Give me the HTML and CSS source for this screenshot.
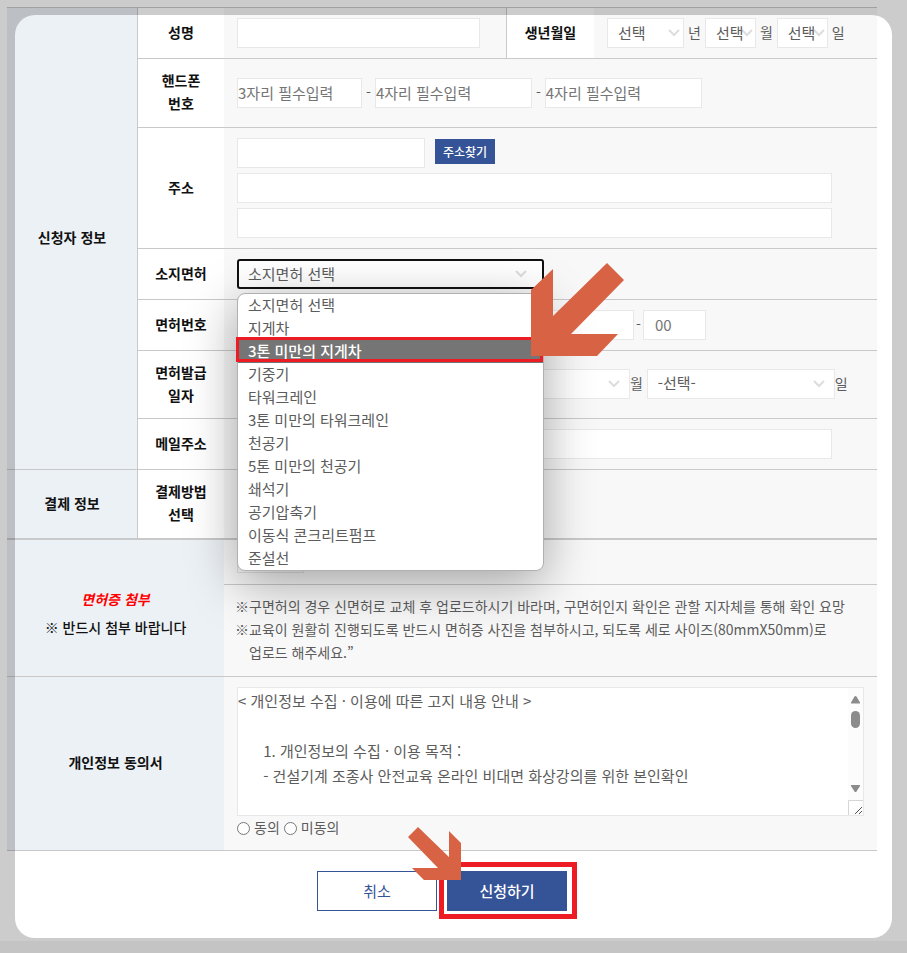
FILE: index.html
```html
<!DOCTYPE html>
<html lang="ko">
<head>
    <meta charset="UTF-8">
    <meta name="viewport" content="width=device-width, initial-scale=1.0">
    <title>교육 신청</title>
    <link rel="stylesheet" href="styles.css">
</head>
<body>
    <form class="apply">
        <table class="form-table">
            <colgroup>
                <col class="col-group">
                <col class="col-label">
                <col class="col-name">
                <col class="col-birth">
                <col>
            </colgroup>
            <tr>
                <th class="group split" rowspan="7">신청자 정보</th>
                <th><label for="name">성명</label></th>
                <td><input type="text" id="name" class="w-name"></td>
                <th class="birth">생년월일</th>
                <td>
                    <div class="line">
                        <select class="w-year" aria-label="년"><option>선택</option></select>
                        <span>년</span>
                        <select class="w-day" aria-label="월"><option>선택</option></select>
                        <span>월</span>
                        <select class="w-day" aria-label="일"><option>선택</option></select>
                        <span>일</span>
                    </div>
                </td>
            </tr>
            <tr class="row-tall">
                <th>핸드폰<br>번호</th>
                <td colspan="3">
                    <div class="line">
                        <input type="text" class="w-phone1" placeholder="3자리 필수입력" aria-label="핸드폰 앞자리">
                        <span>-</span>
                        <input type="text" class="w-phone" placeholder="4자리 필수입력" aria-label="핸드폰 가운데자리">
                        <span>-</span>
                        <input type="text" class="w-phone" placeholder="4자리 필수입력" aria-label="핸드폰 끝자리">
                    </div>
                </td>
            </tr>
            <tr>
                <th>주소</th>
                <td colspan="3">
                    <div class="address">
                        <div class="zip">
                            <input type="text" class="w-zip" aria-label="우편번호">
                            <button type="button" class="btn-find">주소찾기</button>
                        </div>
                        <input type="text" class="w-full" aria-label="주소">
                        <input type="text" class="w-full" aria-label="상세주소">
                    </div>
                </td>
            </tr>
            <tr>
                <th><label for="license">소지면허</label></th>
                <td colspan="3">
                    <div class="license">
                        <select id="license" class="focused"><option>소지면허 선택</option></select>
                        <ul class="options">
                            <li>소지면허 선택</li>
                            <li>지게차</li>
                            <li class="active">3톤 미만의 지게차</li>
                            <li>기중기</li>
                            <li>타워크레인</li>
                            <li>3톤 미만의 타워크레인</li>
                            <li>천공기</li>
                            <li>5톤 미만의 천공기</li>
                            <li>쇄석기</li>
                            <li>공기압축기</li>
                            <li>이동식 콘크리트펌프</li>
                            <li>준설선</li>
                        </ul>
                        <svg class="arrow arrow-license" width="93" height="93" viewBox="0 0 93 93" aria-hidden="true">
                            <path d="M22 6V53L76 0L93 17L40 71H87L66 93H0V27Z"/>
                        </svg>
                    </div>
                </td>
            </tr>
            <tr>
                <th>면허번호</th>
                <td colspan="3">
                    <div class="line tight">
                        <input type="text" class="w-number" aria-label="면허번호">
                        <span>-</span>
                        <input type="text" class="w-suffix" placeholder="00" aria-label="면허번호 끝자리">
                    </div>
                </td>
            </tr>
            <tr class="row-date">
                <th>면허발급<br>일자</th>
                <td colspan="3">
                    <div class="line date">
                        <label><select><option></option></select>년</label>
                        <label><select><option></option></select>월</label>
                        <label><select><option>-선택-</option></select>일</label>
                    </div>
                </td>
            </tr>
            <tr>
                <th><label for="mail">메일주소</label></th>
                <td colspan="3"><input type="text" id="mail" class="w-full"></td>
            </tr>
            <tr class="row-tall">
                <th class="group split">결제 정보</th>
                <th>결제방법<br>선택</th>
                <td colspan="3"><input type="radio" name="pay" aria-label="결제방법"></td>
            </tr>
        </table>

        <table class="form-table">
            <colgroup>
                <col class="col-wide">
                <col>
            </colgroup>
            <tr class="row-file">
                <th class="group attach" rowspan="2">
                    <label for="file"><em>면허증 첨부</em><br><span>※ 반드시 첨부 바랍니다</span></label>
                </th>
                <td><input type="file" id="file"></td>
            </tr>
            <tr>
                <td class="notice">
                    <ul>
                        <li>구면허의 경우 신면허로 교체 후 업로드하시기 바라며, 구면허인지 확인은 관할 지자체를 통해 확인 요망</li>
                        <li>교육이 원활히 진행되도록 반드시 면허증 사진을 첨부하시고, 되도록 세로 사이즈(80mmX50mm)로<br>업로드 해주세요.”</li>
                    </ul>
                </td>
            </tr>
            <tr>
                <th class="group"><label for="terms">개인정보 동의서</label></th>
                <td>
                    <div class="terms">
                        <textarea id="terms" readonly>&lt; 개인정보 수집 · 이용에 따른 고지 내용 안내 &gt;

      1. 개인정보의 수집 · 이용 목적 :
      - 건설기계 조종사 안전교육 온라인 비대면 화상강의를 위한 본인확인
</textarea>
                        <div class="scrollbar">
                            <svg width="15" height="127" viewBox="0 0 15 127" aria-hidden="true">
                                <path fill="#8b8b8b" d="M6.500 8.500Q7.500 7.500 8.500 8.500L12 14.500V15.500H3V14.500ZM3 97V98L6.500 103.500Q7.500 104.500 8.500 103.500L12 98V97Z"/>
                                <rect x="3" y="23" width="9" height="17" rx="4.500" fill="#8b8b8b"/>
                                <path fill="#fff" stroke="#d5d5d5" d="M0.500 127.500V112.500H15"/>
                                <path fill="none" stroke="#555" d="M7 126L14 119M11 126L14 123"/>
                            </svg>
                        </div>
                    </div>
                    <div class="line agree">
                        <label class="radio"><input type="radio" name="agree"><span>동의</span></label>
                        <label class="radio"><input type="radio" name="agree"><span>미동의</span></label>
                    </div>
                </td>
            </tr>
        </table>

        <div class="buttons">
            <button type="button" class="btn">취소</button>
            <div class="submit">
                <button type="submit" class="btn btn-primary">신청하기</button>
                <svg class="arrow arrow-submit" width="53" height="53" viewBox="0 0 53 53" aria-hidden="true">
                    <path d="M41 4L53 16V53H16L4 41H30L0 10L10 0L41 30Z"/>
                </svg>
            </div>
        </div>
    </form>
    <footer></footer>
    <div class="spotlight"></div>
</body>
</html>
```
FILE: styles.css
```css
* {
    box-sizing: border-box;
}
body {
    margin: 0;
    min-height: 100vh;
    display: flex;
    flex-direction: column;
    background: #fff;
    color: #5c5c5c;
    font-family: "Noto Sans CJK KR", sans-serif;
    font-size: 14px;
    line-height: 23px;
}
.apply {
    padding: 7px 30px 30px 7px;
}
footer {
    flex: 1;
    background: #f5f5f5;
}

/* form tables */
.form-table {
    width: 100%;
    table-layout: fixed;
    border-collapse: separate;
    border-spacing: 0;
    border-top: 1px solid #c9c9c9;
}
.col-group {
    width: 131px;
}
.col-label {
    width: 86px;
}
.col-name {
    width: 282px;
}
.col-birth {
    width: 88px;
}
.col-wide {
    width: 217px;
}
th, td {
    padding: 10px 13px;
    border-bottom: 1px solid #c9c9c9;
    vertical-align: middle;
}
th {
    padding: 9px 0 11px;
    background: #fff;
    color: #111;
    font-weight: bold;
    text-align: center;
}
td {
    background: #f8f8f8;
}
.group {
    background: #ecf1f6;
}
.split {
    border-right: 1px solid #c9c9c9;
}
.birth {
    border-left: 1px solid #c9c9c9;
}
.row-tall {
    height: 69px;
}
.row-date {
    height: 68px;
}
.row-file {
    height: 45px;
}

/* fields */
input, select, textarea, button {
    margin: 0;
    font-family: inherit;
    font-size: 15px;
    color: #5c5c5c;
}
input[type="text"], select {
    display: block;
    height: 30px;
    padding: 0 0 2px;
    border: 1px solid #e8e8e8;
    border-radius: 0;
    background: #fff;
}
input::placeholder {
    color: #757575;
}
select {
    appearance: none;
    padding: 0 0 2px 10px;
    background: #fff url("data:image/svg+xml,%3Csvg xmlns='http://www.w3.org/2000/svg' width='12' height='8'%3E%3Cpath d='M1 1l5 5 5-5' fill='none' stroke='%23ddd' stroke-width='2'/%3E%3C/svg%3E") no-repeat 95% 50%;
}
input[type="radio"] {
    display: block;
    width: 13px;
    height: 13px;
}
.line {
    display: flex;
    align-items: center;
    gap: 4px;
}
.line span {
    padding-bottom: 2px;
}
.tight {
    gap: 2px;
}
.w-name {
    width: 243px;
}
.w-year {
    width: 77px;
}
.w-day {
    width: 51px;
}
.w-phone1 {
    width: 125px;
}
.w-phone {
    width: 157px;
}
.w-zip {
    width: 188px;
}
.w-full {
    width: 595px;
}
.w-number {
    width: 397px;
}
input.w-suffix {
    width: 63px;
    padding-left: 11px;
}
.date label {
    display: flex;
    align-items: center;
    padding-bottom: 2px;
}
.date select {
    width: 188px;
}
.address {
    display: flex;
    flex-direction: column;
    gap: 5px;
}
.zip {
    display: flex;
    align-items: flex-start;
    gap: 10px;
}
.btn-find {
    width: 60px;
    height: 25px;
    margin-top: 1px;
    padding: 0 0 1px;
    border: 0;
    background: #355397;
    color: #fff;
    font-size: 12px;
    font-weight: 500;
}
.radio {
    display: flex;
    align-items: center;
    gap: 4px;
}

/* opened license list */
.license {
    position: relative;
    width: 307px;
}
.license .focused {
    width: 100%;
    padding-left: 9px;
    border: 2px solid #111;
    border-radius: 3px;
}
.options {
    position: absolute;
    top: 34px;
    left: 0;
    z-index: 1;
    width: 100%;
    margin: 0;
    padding: 0;
    border: 1px solid #b0b0b0;
    border-radius: 8px;
    background: #fff;
    box-shadow: 0 12px 50px rgba(0, 0, 0, 0.35);
    list-style: none;
    font-size: 15px;
    line-height: 21px;
}
.options li {
    padding: 0 0 2px 10px;
}
.options .active {
    position: relative;
    background: #757575;
    color: #fff;
    font-weight: 500;
}
.options .active::after {
    content: "";
    position: absolute;
    inset: -3px 0 1px -2px;
    border: 3px solid #ed1c24;
}
.arrow {
    position: absolute;
    z-index: 2;
    fill: #d86344;
}
.arrow-license {
    top: 4px;
    left: 294px;
}

/* attachment and agreement */
input[type="file"] {
    display: block;
    width: 67px;
    height: 22px;
    border: 1px solid #e0e0e0;
}
input::file-selector-button {
    border: 0;
    background: none;
}
.attach {
    padding-top: 21px;
    line-height: 28px;
}
.attach em {
    color: #f00;
}
.attach span {
    font-weight: 500;
}
.notice {
    padding: 10px 11px 12px;
}
.notice ul {
    margin: 0;
    padding: 0;
    list-style: none;
}
.notice li {
    display: flex;
}
.notice li::before {
    content: "※";
    width: 14px;
    flex: none;
}
.terms {
    position: relative;
    height: 129px;
}
.terms textarea {
    display: block;
    width: 100%;
    height: 100%;
    padding: 0;
    border: 1px solid #e8e8e8;
    background: #fff;
    line-height: 25px;
    resize: none;
    overflow: hidden;
}
.scrollbar {
    position: absolute;
    top: 1px;
    right: 1px;
    width: 15px;
    height: 127px;
    background: #fcfcfc;
}
.scrollbar svg {
    display: block;
}
.agree {
    height: 24px;
}

/* bottom buttons */
.buttons {
    display: flex;
    justify-content: center;
    gap: 10px;
    margin-top: 20px;
}
.btn {
    display: block;
    width: 120px;
    height: 40px;
    padding: 0 0 2px;
    border: 1px solid #355397;
    background: #fff;
    color: #355397;
}
.btn-primary {
    background: #355397;
    color: #fff;
    font-weight: 500;
}
.submit {
    position: relative;
}
.submit::after {
    content: "";
    position: absolute;
    inset: -9px -10px -8px -8px;
    border: 5px solid #ed1c24;
    pointer-events: none;
}
.arrow-submit {
    top: -44px;
    left: -39px;
}

/* dimmed edge around the visible part of the form */
.spotlight {
    position: fixed;
    inset: 15px;
    z-index: 10;
    border-radius: 20px;
    box-shadow: 0 0 0 40px rgba(0, 0, 0, 0.2);
    pointer-events: none;
}
```
